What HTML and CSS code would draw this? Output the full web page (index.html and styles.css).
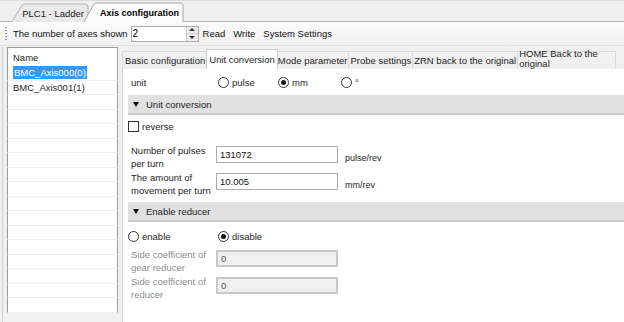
FILE: index.html
```html
<!DOCTYPE html>
<html lang="en">
<head>
  <meta charset="UTF-8">
  <title>Axis configuration</title>
  <link rel="stylesheet" href="styles.css">
</head>
<body>
  <div class="doc-tabs">
    <div class="doc-tab">
      <svg class="tab-shape" viewBox="0 0 78 18" preserveAspectRatio="none"><path d="M0 18 L10 1 Q11 0 13 0 L73 0 Q76 0 76 3 L76 18" fill="#e9e9e9" stroke="#b5b5b5"/></svg>
      <span>PLC1 - Ladder</span>
    </div>
    <div class="doc-tab active">
      <svg class="tab-shape" viewBox="0 0 100 19" preserveAspectRatio="none"><path d="M0 19 L10 1 Q11 0 13 0 L97 0 Q99 0 99 2 L99 19" fill="#fcfcfc" stroke="#a9a9a9"/></svg>
      <span>Axis configuration</span>
    </div>
  </div>

  <div class="toolbar">
    <span class="grip"></span>
    <span>The number of axes shown</span>
    <div class="spin">
      <input type="text" value="2">
      <div class="spin-btns">
        <span class="arrow up"></span>
        <span class="arrow down"></span>
      </div>
    </div>
    <span class="tool">Read</span>
    <span class="tool">Write</span>
    <span class="tool">System Settings</span>
  </div>

  <div class="main">
    <div class="axis-list">
      <div class="list-head">Name</div>
      <div class="list-row"><span class="sel">BMC_Axis000(0)</span></div>
      <div class="list-row">BMC_Axis001(1)</div>
      <div class="list-row"></div>
      <div class="list-row"></div>
      <div class="list-row"></div>
      <div class="list-row"></div>
      <div class="list-row"></div>
      <div class="list-row"></div>
      <div class="list-row"></div>
      <div class="list-row"></div>
      <div class="list-row"></div>
      <div class="list-row"></div>
      <div class="list-row"></div>
      <div class="list-row"></div>
      <div class="list-row"></div>
      <div class="list-row"></div>
      <div class="list-row"></div>
    </div>

    <div class="config">
      <div class="cfg-tabs">
        <div class="cfg-tab">Basic configuration</div>
        <div class="cfg-tab active">Unit conversion</div>
        <div class="cfg-tab">Mode parameter</div>
        <div class="cfg-tab">Probe settings</div>
        <div class="cfg-tab">ZRN back to the original</div>
        <div class="cfg-tab wrap"><span>HOME Back to the original</span></div>
      </div>

      <div class="cfg-body">
        <div class="unit-row">
          <span class="unit-label">unit</span>
          <label class="opt opt-pulse"><span class="radio"></span>pulse</label>
          <label class="opt opt-mm"><span class="radio on"></span>mm</label>
          <label class="opt"><span class="radio"></span>°</label>
        </div>

        <div class="section"><span class="tri"></span>Unit conversion</div>

        <label class="check-row"><span class="checkbox"></span>reverse</label>

        <div class="field">
          <span class="field-label">Number of pulses per turn</span>
          <input class="field-input" type="text" value="131072">
          <span class="field-unit">pulse/rev</span>
        </div>
        <div class="field">
          <span class="field-label">The amount of movement per turn</span>
          <input class="field-input" type="text" value="10.005">
          <span class="field-unit">mm/rev</span>
        </div>

        <div class="section reducer"><span class="tri"></span>Enable reducer</div>

        <div class="reducer-row">
          <label class="opt opt-enable"><span class="radio"></span>enable</label>
          <label class="opt"><span class="radio on"></span>disable</label>
        </div>

        <div class="field disabled">
          <span class="field-label">Side coefficient of gear reducer</span>
          <input class="field-input" type="text" value="0" disabled>
        </div>
        <div class="field disabled">
          <span class="field-label">Side coefficient of reducer</span>
          <input class="field-input" type="text" value="0" disabled>
        </div>
      </div>
    </div>
  </div>
</body>
</html>
```

FILE: styles.css
```css
body {
  margin: 0;
  background: #f0f0f0;
  font-family: "Liberation Sans", Arial, sans-serif;
  font-size: 9.5px;
  color: #1e1e1e;
  width: 624px;
  height: 322px;
  overflow: hidden;
}

/* document tabs */
.doc-tabs {
  height: 22px;
  box-sizing: border-box;
  border-top: 1px solid #dcdcdc;
  border-bottom: 1px solid #b5b5b5;
  background: #efefef;
  display: flex;
  align-items: flex-end;
  padding-left: 12px;
  font-size: 9.5px;
  white-space: nowrap;
}

.doc-tab {
  position: relative;
  height: 18px;
  width: 78px;
  display: flex;
  align-items: center;
  justify-content: flex-end;
  padding: 1px 6px 0 0;
  box-sizing: border-box;
  color: #222;
  margin-bottom: -1px;
}

.doc-tab span {
  position: relative;
}

.doc-tab.active {
  width: 100px;
  height: 19px;
  margin-left: -6px;
  font-weight: bold;
  font-size: 9px;
  color: #000;
  padding-right: 5px;
}

.tab-shape {
  position: absolute;
  left: 0;
  top: 0;
  width: 100%;
  height: 100%;
  overflow: visible;
}

/* toolbar */
.toolbar {
  height: 24px;
  box-sizing: border-box;
  display: flex;
  align-items: center;
  padding-left: 5px;
  background: linear-gradient(#fbfbfb, #f1f1f1);
  border-bottom: 1px solid #e2e2e2;
  font-size: 9.5px;
  color: #111;
}

.grip {
  width: 2px;
  height: 14px;
  margin-right: 6px;
  background: repeating-linear-gradient(#9a9a9a 0 1px, transparent 1px 3px);
}

.spin {
  display: flex;
  width: 68px;
  height: 16px;
  border: 1px solid #abadb3;
  background: #fff;
  box-sizing: border-box;
  margin: 0 4px 0 3px;
}

.spin input {
  flex: 1;
  min-width: 0;
  border: 0;
  padding: 0 1px;
  font: inherit;
  font-size: 10px;
  outline: none;
  background: transparent;
}

.spin-btns {
  width: 11px;
  display: flex;
  flex-direction: column;
  border-left: 1px solid #cfcfcf;
  background: #ececec;
}

.arrow {
  flex: 1;
  display: flex;
  align-items: center;
  justify-content: center;
}

.arrow::before {
  content: "";
  border-left: 3px solid transparent;
  border-right: 3px solid transparent;
}

.arrow.up::before {
  border-bottom: 3px solid #333;
}

.arrow.down {
  border-top: 1px solid #cfcfcf;
}

.arrow.down::before {
  border-top: 3px solid #333;
}

.tool {
  margin-right: 8px;
}

/* main area */
.main {
  display: flex;
  height: 275px;
  padding: 1px 0 0 2px;
  gap: 2px;
}

.axis-list {
  width: 116px;
  box-sizing: border-box;
  border-left: 1px solid #d2d2d2;
  padding-left: 4px;
  display: flex;
  flex-direction: column;
  overflow: hidden;
  background: #f0f0f0;
}

.axis-list > div {
  background: #fff;
  border-left: 1px solid #9b9b9b;
  border-right: 1px solid #9b9b9b;
  flex-shrink: 0;
}

.list-head {
  height: 19px;
  border-top: 1px solid #9b9b9b;
  padding: 4px 0 0 5px;
  box-sizing: border-box;
}

.list-row {
  height: 14.5px;
  box-sizing: border-box;
  border-bottom: 1px solid #efefef;
  padding-left: 5px;
  line-height: 14px;
}

.sel {
  background: #3399ff;
  color: #fff;
  padding: 1px 1px;
}

/* config panel */
.config {
  flex: 1;
  display: flex;
  flex-direction: column;
  padding-top: 2px;
}

.cfg-tabs {
  display: flex;
  align-items: flex-end;
  height: 20px;
  padding-left: 2px;
  position: relative;
  z-index: 2;
}

.cfg-tab {
  height: 18px;
  box-sizing: border-box;
  padding: 3px 1px 0 1px;
  border: 1px solid #d9d9d9;
  border-bottom: 0;
  border-left: 0;
  background: #f0f0f0;
  white-space: nowrap;
}

.cfg-tab:first-child {
  border-left: 1px solid #d9d9d9;
  padding-left: 2px;
}

.cfg-tab.active {
  height: 20px;
  background: #fff;
  border-left: 1px solid #d0d0d0;
  border-color: #d0d0d0;
  padding: 4px 2px 0 2px;
  margin-left: -1px;
  margin-right: -1px;
  position: relative;
  z-index: 1;
}

.cfg-tab.wrap {
  white-space: normal;
  width: 98px;
  line-height: 10px;
  padding-top: 0;
}

.cfg-tab.wrap span {
  display: block;
  margin-top: -3px;
}

.cfg-body {
  flex: 1;
  background: #fff;
  border-left: 1px solid #d0d0d0;
  padding: 0 0 0 5px;
  margin-left: 2px;
}

.unit-row {
  display: flex;
  align-items: center;
  height: 26px;
  padding-left: 3px;
}

.unit-label {
  width: 87px;
}

.opt {
  display: flex;
  align-items: center;
  gap: 3px;
}

.opt-pulse {
  width: 60px;
}

.opt-mm {
  width: 63px;
}

.radio {
  width: 11px;
  height: 11px;
  box-sizing: border-box;
  border: 1px solid #333;
  border-radius: 50%;
  background: #fff;
  display: flex;
  align-items: center;
  justify-content: center;
}

.radio.on::after {
  content: "";
  width: 5px;
  height: 5px;
  border-radius: 50%;
  background: #111;
}

.section {
  height: 20px;
  box-sizing: border-box;
  background: #e1e1e1;
  border-bottom: 2px solid #c9c9c9;
  display: flex;
  align-items: center;
  padding-left: 5px;
}

.section.reducer {
  margin-top: 2px;
}

.tri {
  width: 0;
  height: 0;
  border-left: 3.5px solid transparent;
  border-right: 3.5px solid transparent;
  border-top: 5px solid #111;
  margin-right: 7px;
}

.check-row {
  display: flex;
  align-items: center;
  gap: 3px;
  height: 12px;
  margin: 5px 0 14px 0;
}

.checkbox {
  width: 11px;
  height: 11px;
  box-sizing: border-box;
  border: 1px solid #333;
  background: #fff;
}

.field {
  display: flex;
  align-items: flex-start;
  height: 27px;
  padding-left: 3px;
}

.field-label {
  width: 85px;
  line-height: 12.5px;
  margin-top: -1px;
}

.field-input {
  width: 122px;
  height: 17px;
  box-sizing: border-box;
  border: 1px solid #abadb3;
  padding: 0 3px;
  font: inherit;
  margin: 0 7px 0 0;
  color: #111;
}

.field-unit {
  margin-top: 7px;
  font-size: 9px;
}

.reducer-row {
  display: flex;
  align-items: center;
  height: 28px;
}

.opt-enable {
  width: 90px;
}

.field.disabled .field-label {
  color: #8c8c8c;
}

.field.disabled .field-input {
  background: #f0f0f0;
  border: 2px solid #c8c8c8;
  color: #555;
}
```
